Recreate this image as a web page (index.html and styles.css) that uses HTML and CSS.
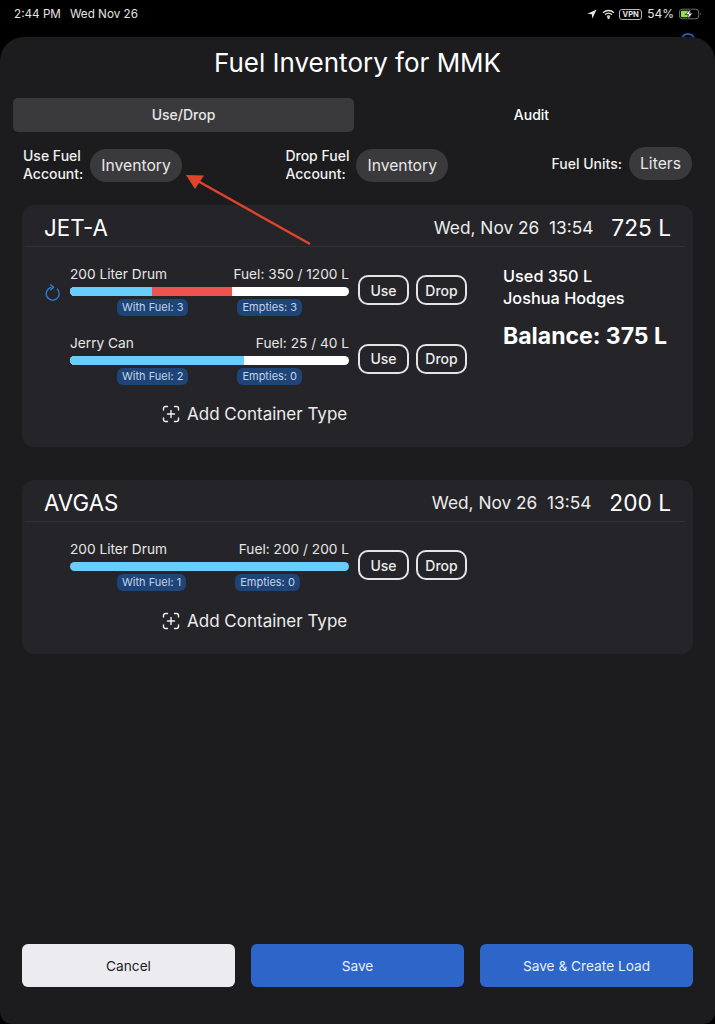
FILE: index.html
```html
<!DOCTYPE html>
<html lang="en">
<head>
  <meta charset="UTF-8">
  <meta name="viewport" content="width=device-width, initial-scale=1.0">
  <title>Fuel Inventory for MMK</title>
  <link rel="stylesheet" href="styles.css">
</head>
<body>
  <div class="status-bar">
    <div class="status-left">
      <span class="status-time">2:44 PM</span>
      <span>Wed Nov 26</span>
    </div>
    <div class="status-right">
      <svg class="icon-location" width="10" height="10" viewBox="0 0 12 12"><path d="M11.5 .5 L.5 5.6 L5.8 6.2 L6.4 11.5 Z" fill="#e8e8e8"/></svg>
      <svg class="icon-wifi" width="13" height="10" viewBox="0 0 14 11" fill="none" stroke="#e8e8e8" stroke-width="1.5"><path d="M1 4 C4.4 .9 9.6 .9 13 4"/><path d="M3.2 6.2 C5.4 4.3 8.6 4.3 10.8 6.2"/><path d="M5.3 8.2 C6.3 7.4 7.7 7.4 8.7 8.2"/><circle cx="7" cy="9.7" r=".6"/></svg>
      <span class="vpn">VPN</span>
      <span>54%</span>
      <svg class="icon-battery" width="23" height="12" viewBox="0 0 24 12"><rect x=".5" y="1" width="20" height="10" rx="3" fill="none" stroke="#777"/><rect x="2" y="2.5" width="10" height="7" rx="1.5" fill="#8fe04a"/><path d="M22 4.5 a2 2 0 0 1 0 3 Z" fill="#777"/><path d="M12.5 .5 L6.5 6.6 H10 L8.5 11.5 L14.5 5.2 H11 Z" fill="#fff" stroke="#000" stroke-width=".7"/></svg>
    </div>
  </div>
  <svg class="peek-icon" width="16" height="6" viewBox="0 0 16 6" fill="none" stroke="#2f6fd0" stroke-width="1.3"><path d="M2 6 A6.5 6.5 0 0 1 14 6"/></svg>

  <div class="sheet">
    <h1>Fuel Inventory for MMK</h1>

    <div class="tabs">
      <div class="tab active">Use/Drop</div>
      <div class="tab">Audit</div>
    </div>

    <div class="accounts">
      <div class="account">
        <span class="account-label">Use Fuel<br>Account:</span>
        <span class="pill">Inventory</span>
      </div>
      <div class="account">
        <span class="account-label">Drop Fuel<br>Account:</span>
        <span class="pill">Inventory</span>
      </div>
      <div class="account">
        <span class="account-label">Fuel Units:</span>
        <span class="pill">Liters</span>
      </div>
    </div>

    <div class="card card-jet">
      <div class="card-head">
        <span class="fuel-name">JET-A</span>
        <span class="stamp">Wed, Nov 26&nbsp; 13:54</span>
        <span class="total">725 L</span>
      </div>
      <div class="card-body">
        <div class="containers">
          <div class="row">
            <svg class="icon-refresh" width="18" height="18" viewBox="0 0 18 18" fill="none" stroke="#2f80e0" stroke-width="1.3" stroke-linecap="round" stroke-linejoin="round"><path d="M7 3.4 A6.5 6.5 0 1 0 13.4 5.2"/><path d="M6.6 .8 L9.6 3.2 L6.8 5.8"/></svg>
            <div class="gauge">
              <div class="gauge-text"><span>200 Liter Drum</span><span>Fuel: 350 / 1200 L</span></div>
              <div class="bar">
                <div class="seg seg-fuel" style="width: 29.3%"></div>
                <div class="seg seg-used" style="width: 28.9%"></div>
              </div>
              <div class="tags"><span class="tag">With Fuel: 3</span><span class="tag">Empties: 3</span></div>
            </div>
            <div class="actions"><button class="btn-line">Use</button><button class="btn-line">Drop</button></div>
          </div>
          <div class="row">
            <div class="gauge">
              <div class="gauge-text"><span>Jerry Can</span><span>Fuel: 25 / 40 L</span></div>
              <div class="bar">
                <div class="seg seg-fuel" style="width: 62.5%"></div>
              </div>
              <div class="tags"><span class="tag">With Fuel: 2</span><span class="tag">Empties: 0</span></div>
            </div>
            <div class="actions"><button class="btn-line">Use</button><button class="btn-line">Drop</button></div>
          </div>
          <div class="add-row">
            <svg class="icon-add" width="18" height="18" viewBox="0 0 18 18" fill="none" stroke="#f2f2f2" stroke-width="1.4" stroke-linecap="round"><path d="M1.5 5 V3.5 a2 2 0 0 1 2-2 H5.5"/><path d="M12.5 1.5 H14.5 a2 2 0 0 1 2 2 V5"/><path d="M16.5 13 V14.5 a2 2 0 0 1-2 2 H12.5"/><path d="M5.5 16.5 H3.5 a2 2 0 0 1-2-2 V13"/><path d="M9 5.5 V12.5 M5.5 9 H12.5"/></svg>
            <span>Add Container Type</span>
          </div>
        </div>
        <div class="summary">
          <div class="used">Used 350 L<br>Joshua Hodges</div>
          <div class="balance">Balance: 375 L</div>
        </div>
      </div>
    </div>

    <div class="card card-avgas">
      <div class="card-head">
        <span class="fuel-name">AVGAS</span>
        <span class="stamp">Wed, Nov 26&nbsp; 13:54</span>
        <span class="total">200 L</span>
      </div>
      <div class="card-body">
        <div class="containers">
          <div class="row">
            <div class="gauge">
              <div class="gauge-text"><span>200 Liter Drum</span><span>Fuel: 200 / 200 L</span></div>
              <div class="bar">
                <div class="seg seg-fuel" style="width: 100%"></div>
              </div>
              <div class="tags"><span class="tag">With Fuel: 1</span><span class="tag">Empties: 0</span></div>
            </div>
            <div class="actions"><button class="btn-line">Use</button><button class="btn-line">Drop</button></div>
          </div>
          <div class="add-row">
            <svg class="icon-add" width="18" height="18" viewBox="0 0 18 18" fill="none" stroke="#f2f2f2" stroke-width="1.4" stroke-linecap="round"><path d="M1.5 5 V3.5 a2 2 0 0 1 2-2 H5.5"/><path d="M12.5 1.5 H14.5 a2 2 0 0 1 2 2 V5"/><path d="M16.5 13 V14.5 a2 2 0 0 1-2 2 H12.5"/><path d="M5.5 16.5 H3.5 a2 2 0 0 1-2-2 V13"/><path d="M9 5.5 V12.5 M5.5 9 H12.5"/></svg>
            <span>Add Container Type</span>
          </div>
        </div>
      </div>
    </div>

    <div class="footer">
      <button class="btn btn-cancel">Cancel</button>
      <button class="btn btn-save">Save</button>
      <button class="btn btn-save">Save &amp; Create Load</button>
    </div>

    <!-- annotation arrow drawn over the screenshot -->
    <svg class="arrow" width="140" height="80" viewBox="0 0 140 80" fill="none">
      <path d="M128 70 L14 6" stroke="#e0452c" stroke-width="2.4"/>
      <path d="M4 1 L22 1.5 L13 15 Z" fill="#e0452c"/>
    </svg>
  </div>
</body>
</html>
```

FILE: styles.css
```css
* {
  box-sizing: border-box;
}
html, body {
  height: 100%;
}
body {
  margin: 0;
  width: 715px;
  height: 1024px;
  overflow: hidden;
  position: relative;
  background-color: #000;
  color: #fff;
  font-family: Inter, "Liberation Sans", sans-serif;
}
.status-bar {
  height: 37px;
  padding: 6px 13px 0 14px;
  display: flex;
  justify-content: space-between;
  align-items: flex-start;
  font-size: 11.7px;
  line-height: 16px;
  color: #e4e4e4;
}
.status-left {
  display: flex;
  gap: 9px;
}
.status-right {
  display: flex;
  align-items: center;
  gap: 5px;
  font-size: 12px;
}
.vpn {
  width: 23px;
  margin-left: -1px;
  text-align: center;
  border: 1px solid #bbb;
  border-radius: 3px;
  font-size: 7.5px;
  font-weight: 700;
  line-height: 9px;
}
.peek-icon {
  position: absolute;
  left: 680px;
  top: 32px;
}
.sheet {
  position: relative;
  height: 987px;
  padding: 0 22px;
  display: flex;
  flex-direction: column;
  background-color: #1c1c1e;
  border-radius: 24px 24px 12px 12px;
}
h1 {
  margin: 0;
  height: 61px;
  line-height: 52px;
  text-align: center;
  font-size: 26px;
  font-weight: 400;
}
.tabs {
  margin: 0 -9px;
  display: flex;
  gap: 7px;
}
.tab {
  flex: 1;
  height: 34px;
  line-height: 34px;
  text-align: center;
  font-size: 14px;
  font-weight: 500;
  border-radius: 5px;
}
.tab.active {
  background-color: #3a3a3c;
  color: #e8e8e8;
}
.accounts {
  height: 73px;
  padding-top: 15px;
  display: flex;
  justify-content: space-between;
  align-items: flex-start;
  margin-left: 1px;
  margin-right: 1px;
}
.account {
  display: flex;
  align-items: center;
  gap: 7px;
}
.account-label {
  font-size: 14px;
  font-weight: 500;
  line-height: 18px;
  color: #f0f0f0;
}
.pill {
  height: 33px;
  line-height: 33px;
  padding: 0 11px;
  border-radius: 17px;
  background-color: #3a3a3c;
  color: #e8e8e8;
  font-size: 15.7px;
}
.card {
  margin-bottom: 33px;
  background-color: #252529;
  border-radius: 12px;
}
.card-jet {
  height: 242px;
}
.card-avgas {
  height: 174px;
}
.card-head {
  height: 42px;
  margin: 0 8px 0 3px;
  padding: 4px 14px 0 19px;
  display: flex;
  align-items: center;
  border-bottom: 1px solid #303034;
}
.fuel-name {
  flex: 1;
  font-size: 22.3px;
}
.stamp {
  font-size: 17.3px;
  color: #ececec;
}
.total {
  margin-left: 18px;
  font-size: 22.7px;
}
.card-body {
  display: flex;
  padding: 18px 0 0 48px;
}
.containers {
  width: 397px;
}
.row {
  position: relative;
  height: 68.5px;
  display: flex;
  gap: 9px;
}
.icon-refresh {
  position: absolute;
  left: -26px;
  top: 19px;
}
.gauge {
  width: 279px;
}
.gauge-text {
  height: 18px;
  line-height: 18px;
  display: flex;
  justify-content: space-between;
  font-size: 13.7px;
  color: #e6e6e6;
}
.bar {
  height: 9px;
  margin-top: 4px;
  display: flex;
  background-color: #fff;
  border-radius: 5px;
  overflow: hidden;
}
.seg-fuel {
  background-color: #66cdfc;
}
.seg-used {
  background-color: #ef534f;
}
.tags {
  margin-top: 3px;
  padding-left: 47px;
  display: flex;
  gap: 49px;
}
.tag {
  height: 17px;
  line-height: 17px;
  padding: 0 5px;
  border-radius: 6px;
  background-color: #1f4478;
  color: #c4d4e8;
  font-size: 11px;
}
.actions {
  padding-top: 10px;
  display: flex;
  gap: 7px;
}
.btn-line {
  height: 30px;
  width: 51px;
  padding: 0;
  background: none;
  border: 2px solid #e4e4e4;
  border-radius: 10px;
  color: #ececec;
  font-family: inherit;
  font-size: 14px;
  font-weight: 500;
}
.add-row {
  margin-top: 0;
  padding-left: 92px;
  display: flex;
  align-items: center;
  gap: 7px;
  height: 24px;
  font-size: 17px;
  color: #ececec;
}
.summary {
  margin-left: 36px;
}
.used {
  font-size: 16.3px;
  font-weight: 500;
  line-height: 22px;
}
.balance {
  margin-top: 13px;
  font-size: 23px;
  font-weight: 700;
}
.footer {
  margin-top: auto;
  margin-bottom: 37px;
  display: flex;
  gap: 16px;
}
.btn {
  flex: 1;
  height: 43px;
  padding: 0;
  border: none;
  border-radius: 6px;
  font-family: inherit;
  font-size: 13.7px;
}
.btn-cancel {
  background-color: #ebebf0;
  color: #1c1c1e;
}
.btn-save {
  background-color: #2d66c8;
  color: #e8eefa;
}
.arrow {
  position: absolute;
  left: 182px;
  top: 137px;
}
```
